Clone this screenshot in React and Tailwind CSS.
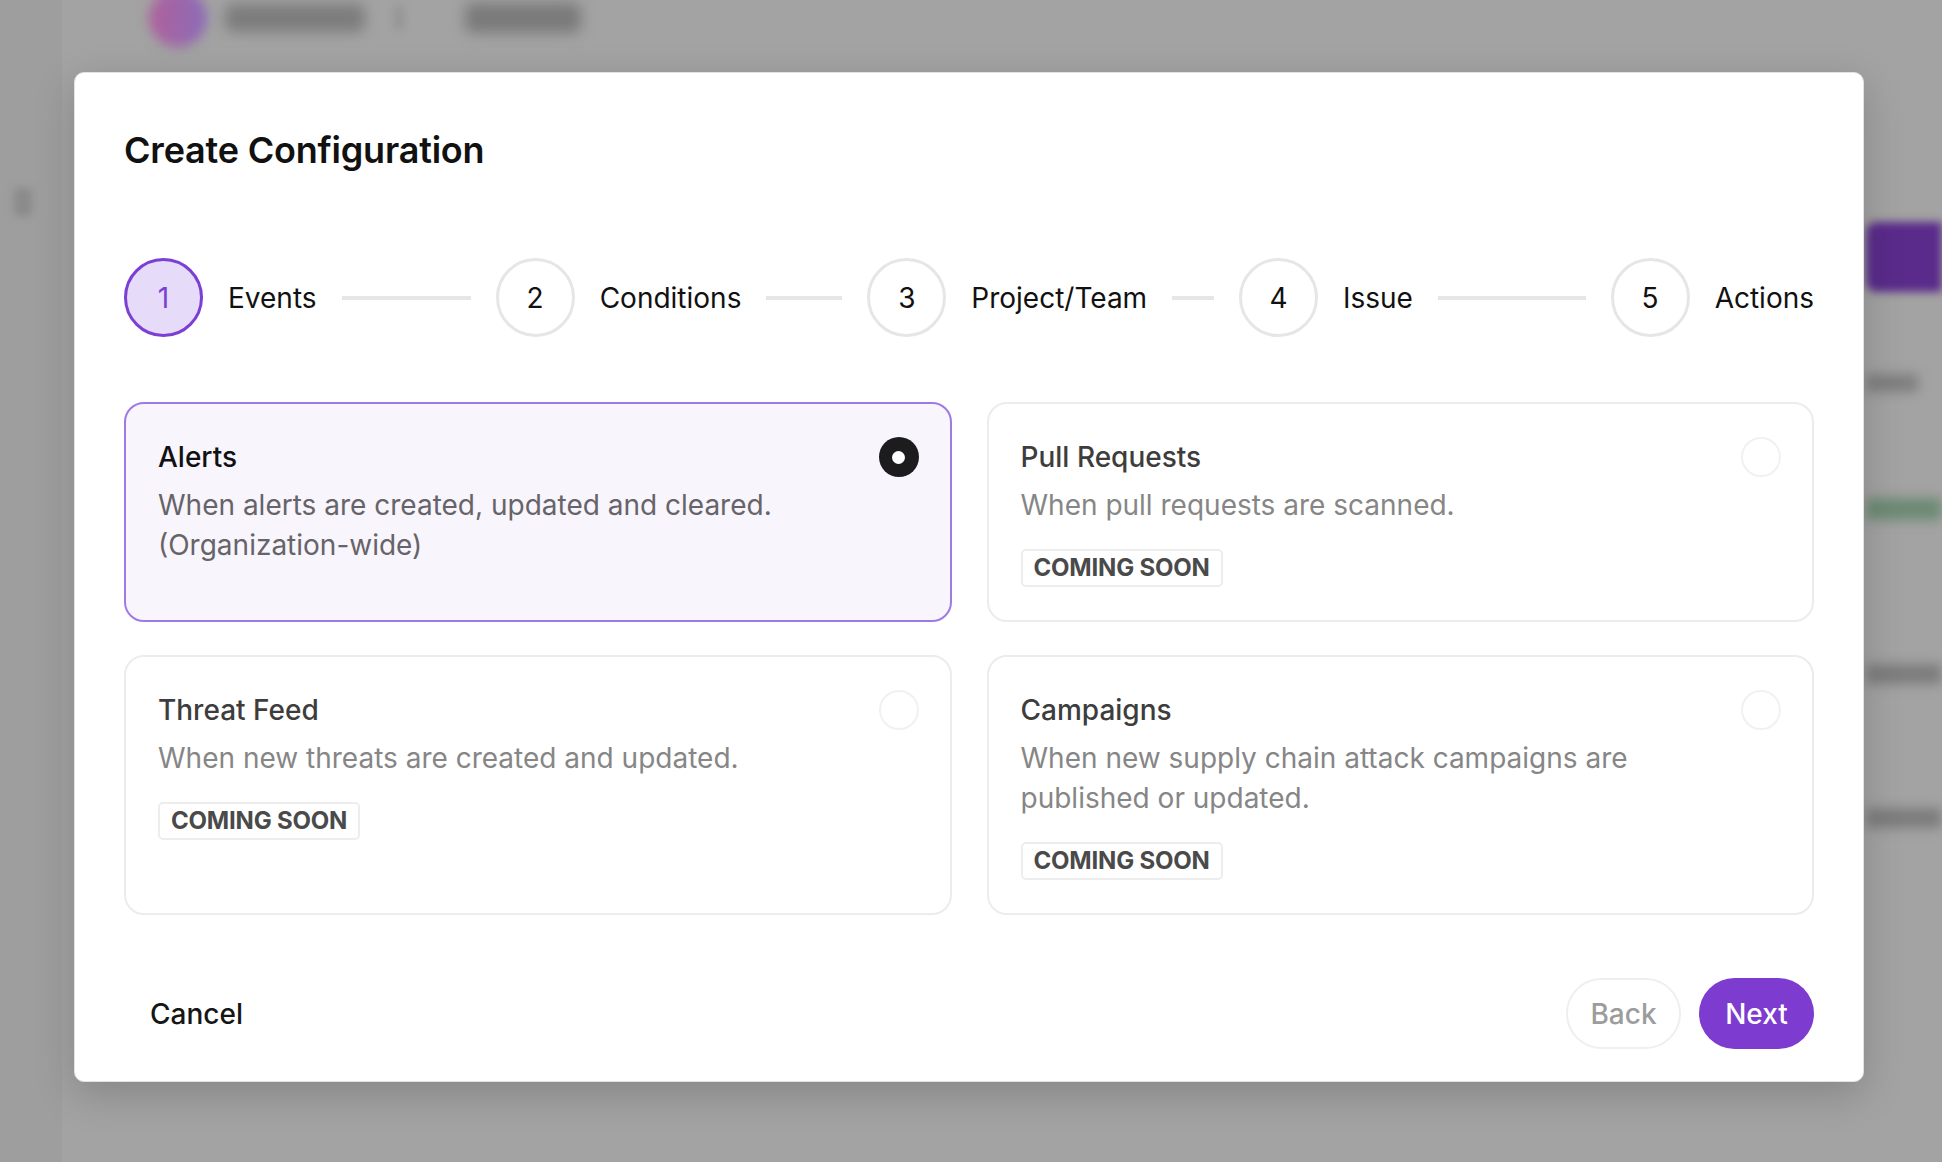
import React from "react";

const steps = [
  { n: 1, label: "Events", active: true },
  { n: 2, label: "Conditions" },
  { n: 3, label: "Project/Team" },
  { n: 4, label: "Issue" },
  { n: 5, label: "Actions", last: true },
];

const cards = [
  {
    title: "Alerts",
    desc: "When alerts are created, updated and cleared. (Organization-wide)",
    selected: true,
  },
  {
    title: "Pull Requests",
    desc: "When pull requests are scanned.",
    soon: true,
  },
  {
    title: "Threat Feed",
    desc: "When new threats are created and updated.",
    soon: true,
  },
  {
    title: "Campaigns",
    desc: "When new supply chain attack campaigns are published or updated.",
    soon: true,
  },
];

function Step({ n, label, active, last }) {
  return (
    <div className={`flex items-center gap-[25px] ${last ? "shrink-0" : "flex-1 min-w-0"}`}>
      <div
        className={`flex h-[79px] w-[79px] shrink-0 items-center justify-center rounded-full border-[3px] text-[28px] ${
          active
            ? "border-[#7c3fd4] bg-[#e6dbf8] text-[#7c3fd4]"
            : "border-[#e6e6e6] bg-white text-[#111111]"
        }`}
      >
        {n}
      </div>
      <span className="shrink-0 whitespace-nowrap text-[28px] leading-[40px] text-[#111111]">{label}</span>
      {!last && <div className="mr-[25px] h-[4px] min-w-[10px] flex-1 bg-[#e6e6e6]" />}
    </div>
  );
}

function Card({ title, desc, selected, soon }) {
  return (
    <div
      className={`flex items-start gap-[24px] rounded-[20px] border-2 pl-[32px] pr-[31px] pt-[33px] pb-[33px] ${
        selected ? "border-[#a07ae4] bg-[#f8f5fd]" : "border-[#ececec] bg-white"
      }`}
    >
      <div className="flex min-w-0 flex-1 flex-col">
        <div
          className={`text-[28px] font-medium leading-[40px] ${
            selected ? "text-[#111111]" : "text-[#3d3d3d]"
          }`}
        >
          {title}
        </div>
        <div
          className={`mt-[8px] text-[28px] leading-[40px] ${
            selected ? "text-[#666468]" : "text-[#868686]"
          }`}
        >
          {desc}
        </div>
        {soon && (
          <div className="mt-[24px] flex">
            <span className="flex h-[38px] items-center rounded-[5px] border-2 border-[#ededed] bg-white px-[11px] text-[24px] font-bold tracking-[-0.2px] text-[#4a4a4a]">
              COMING SOON
            </span>
          </div>
        )}
      </div>
      <div
        className={`flex h-[40px] w-[40px] shrink-0 items-center justify-center rounded-full ${
          selected ? "bg-[#1c1c1e]" : "border-2 border-[#f1f1f1] bg-white"
        }`}
      >
        {selected && <div className="h-[13px] w-[13px] rounded-full bg-white" />}
      </div>
    </div>
  );
}

export default function App() {
  return (
    <div className="relative h-[1162px] w-[1942px] overflow-hidden bg-[#a3a3a3] font-['Inter','Noto_Sans',sans-serif]">
      {/* blurred page behind the dialog */}
      <div className="flex h-full">
        <aside className="flex w-[62px] shrink-0 flex-col bg-[#9e9e9e] pl-[14px] pt-[188px]">
          <div className="h-[28px] w-[18px] rounded-[4px] bg-[#8a8a8a] blur-[4px]" />
        </aside>
        <div className="flex min-w-0 flex-1 flex-col">
          <header className="-mt-[12px] flex h-[60px] items-center pl-[87px]">
            <div className="h-[58px] w-[58px] rounded-full bg-gradient-to-r from-[#b0609a] to-[#8a6ab8] blur-[6px]" />
            <div className="ml-[18px] h-[28px] w-[140px] rounded-[8px] bg-[#7c7c7c] blur-[7px]" />
            <div className="ml-[30px] h-[24px] w-[8px] rounded bg-[#909090] blur-[5px]" />
            <div className="ml-[62px] h-[30px] w-[116px] rounded-[8px] bg-[#7a7a7a] blur-[7px]" />
          </header>
          <div className="flex flex-1 justify-end">
            <div className="flex w-[76px] flex-col">
              <div className="mt-[174px] h-[70px] rounded-l-[10px] bg-[#5a2b8a] blur-[4px]" />
              <div className="mt-[82px] h-[18px] w-[52px] rounded bg-[#7e7e7e] blur-[6px]" />
              <div className="mt-[106px] h-[22px] rounded bg-[#6c8a74] blur-[6px]" />
              <div className="mt-[144px] h-[20px] rounded bg-[#7c7c7c] blur-[6px]" />
              <div className="mt-[124px] h-[20px] rounded bg-[#7c7c7c] blur-[6px]" />
            </div>
          </div>
        </div>
      </div>

      {/* dialog */}
      <div className="absolute left-[74px] top-[72px] flex h-[1010px] w-[1790px] flex-col rounded-[10px] border border-[#e2e2e2] bg-white px-[49px] pb-[32px] pt-[55px] shadow-[0_12px_40px_rgba(0,0,0,0.18)]">
        <h1 className="text-[36px] font-semibold leading-[44px] tracking-[-0.2px] text-[#111111]">
          Create Configuration
        </h1>

        <div className="mt-[86px] flex items-center">
          {steps.map((s) => (
            <Step key={s.n} {...s} />
          ))}
        </div>

        <div className="mt-[65px] grid grid-cols-2 gap-x-[35px] gap-y-[33px]">
          {cards.map((c) => (
            <Card key={c.title} {...c} />
          ))}
        </div>

        <div className="mt-auto flex items-center">
          <button className="flex h-[71px] items-center rounded-full px-[26px] text-[28px] font-medium text-[#161616]">
            Cancel
          </button>
          <div className="ml-auto flex items-center gap-[18px]">
            <button className="flex h-[71px] w-[115px] items-center justify-center rounded-full border-2 border-[#efefef] bg-white text-[28px] font-medium text-[#9c9c9c]">
              Back
            </button>
            <button className="flex h-[71px] w-[115px] items-center justify-center rounded-full bg-[#7d3bcf] text-[28px] font-medium text-white">
              Next
            </button>
          </div>
        </div>
      </div>
    </div>
  );
}
